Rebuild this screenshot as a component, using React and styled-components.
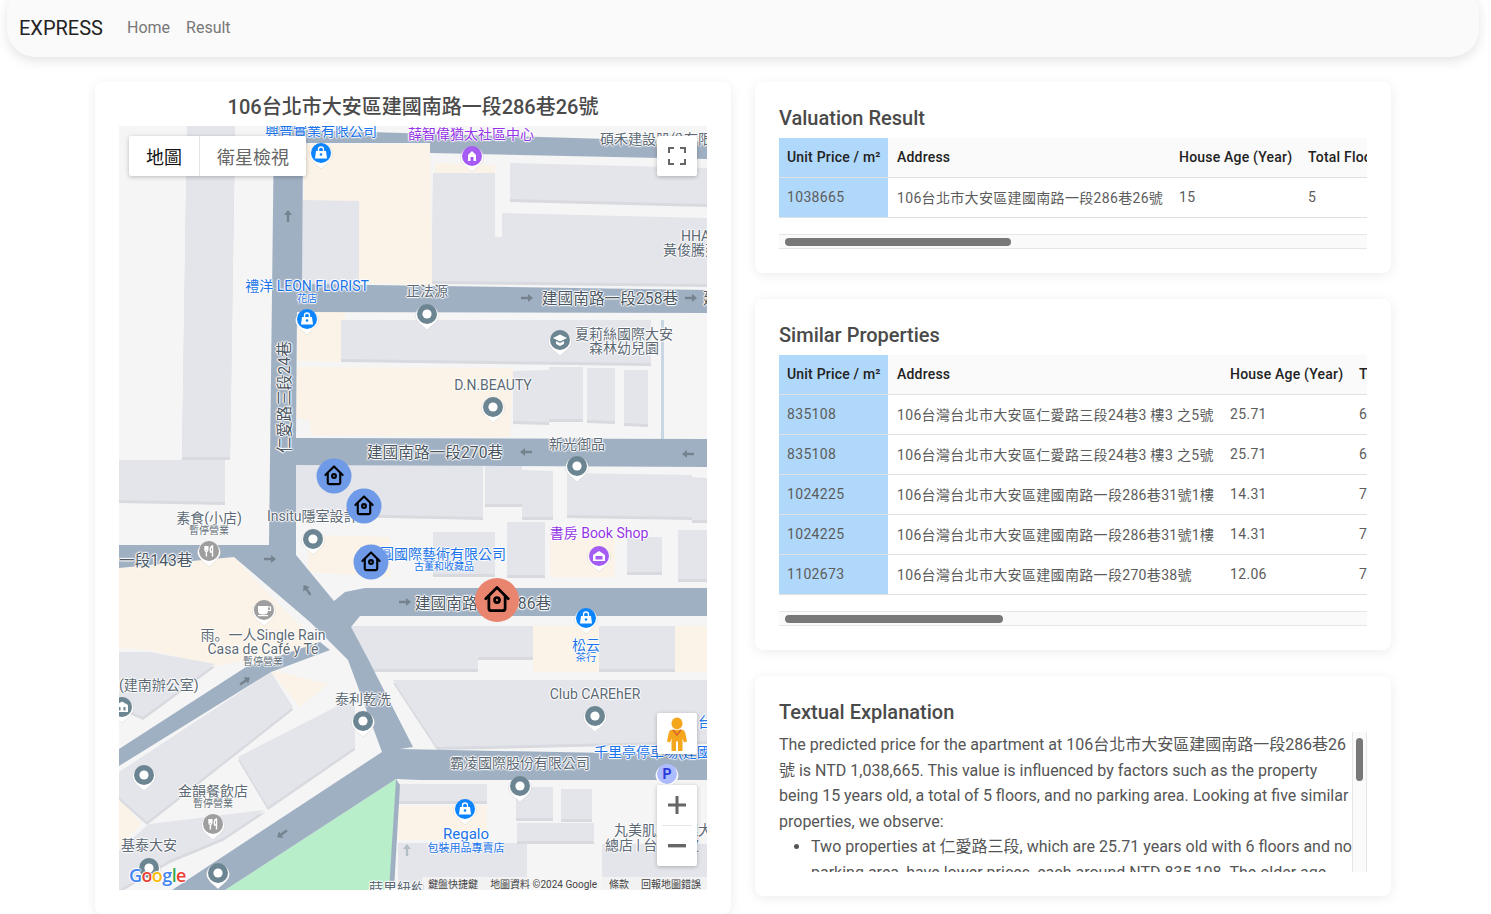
import React from "react";
import styled, { createGlobalStyle } from "styled-components";

const FONT = `Roboto, "Noto Sans CJK TC", "Noto Sans", sans-serif`;

const Global = createGlobalStyle`
  html, body { margin: 0; padding: 0; background: #fff; height: 914px; overflow: hidden; }
  body { font-family: ${FONT}; }
  * { box-sizing: border-box; }
`;

const Page = styled.div`
  width: 1487px;
  height: 914px;
  overflow: hidden;
`;

const NavBar = styled.nav`
  height: 72px;
  margin: -15px 8px 25px 7px;
  padding: 14px 12px 0;
  display: flex;
  align-items: center;
  background: #fafafa;
  border-radius: 28px;
  box-shadow: 0 4px 12px rgba(0, 0, 0, 0.11);
`;
const Brand = styled.a`
  font-size: 20px;
  line-height: 28px;
  color: #222;
  margin-right: 16px;
`;
const NavLink = styled.a`
  font-size: 16px;
  color: #777;
  padding: 0 8px;
  margin-bottom: 2px;
`;

const Columns = styled.main`
  width: 1296px;
  margin: 0 0 0 95px;
  display: grid;
  grid-template-columns: 636px 636px;
  column-gap: 24px;
  align-items: start;
`;
const Stack = styled.div`
  display: flex;
  flex-direction: column;
  gap: 26px;
`;
const Card = styled.section`
  background: #fff;
  border-radius: 8px;
  padding: 24px;
  box-shadow: 0 2px 12px rgba(0, 0, 0, 0.08);
`;
const MapCard = styled(Card)`
  padding: 13px 24px 24px;
`;
const MapTitle = styled.h2`
  margin: 0 0 7px;
  font-size: 20px;
  line-height: 24px;
  font-weight: 500;
  color: #4a4a4a;
  text-align: center;
`;
const CardTitle = styled.h3`
  margin: 0 0 8px;
  font-size: 20px;
  line-height: 24px;
  font-weight: 500;
  color: #4a4a4a;
`;

/* ---------- tables ---------- */
const TableClip = styled.div`
  overflow: hidden;
`;
const Table = styled.table`
  border-collapse: separate;
  border-spacing: 0;
  table-layout: fixed;
  margin-bottom: 16px;
  font-size: 14px;
`;
const Head = styled.th`
  height: 40px;
  padding: 0 8px 2px ${(p) => (p.$wide ? 9 : 8)}px;
  text-align: left;
  font-weight: 500;
  letter-spacing: 0.2px;
  color: #222;
  white-space: nowrap;
  overflow: hidden;
  background: ${(p) => (p.$accent ? "#b0d8fa" : "#fafafa")};
  border-bottom: 1px solid #e0e0e0;
`;
const Cell = styled.td`
  height: 40px;
  padding: 0 8px 2px ${(p) => (p.$wide ? 9 : 8)}px;
  color: #5c5c5c;
  letter-spacing: 0.33px;
  white-space: nowrap;
  overflow: hidden;
  background: ${(p) => (p.$accent ? "#b0d8fa" : "#fff")};
  border-bottom: 1px solid #e0e0e0;
`;
const HTrack = styled.div`
  height: 15px;
  padding: 3px 0 2px 6px;
  background: #fafafa;
  border-top: 1px solid #e6e6e6;
  border-bottom: 1px solid #e6e6e6;
`;
const HThumb = styled.div`
  width: ${(p) => p.$w}px;
  height: 8px;
  border-radius: 4px;
  background: #787878;
`;

const HEADS = ["Unit Price / m²", "Address", "House Age (Year)", "Total Floor"];

function DataTable({ widths, rows, thumb }) {
  return (
    <div>
      <TableClip>
        <Table style={{ width: widths.reduce((a, b) => a + b, 0) }}>
          <colgroup>
            {widths.map((w, i) => (
              <col key={i} style={{ width: w }} />
            ))}
          </colgroup>
          <thead>
            <tr>
              {HEADS.map((h, i) => (
                <Head key={h} $accent={i === 0} $wide={i === 1}>
                  {h}
                </Head>
              ))}
            </tr>
          </thead>
          <tbody>
            {rows.map((r, ri) => (
              <tr key={ri}>
                {r.map((c, i) => (
                  <Cell key={i} $accent={i === 0} $wide={i === 1}>
                    {c}
                  </Cell>
                ))}
              </tr>
            ))}
          </tbody>
        </Table>
      </TableClip>
      <HTrack>
        <HThumb $w={thumb} />
      </HTrack>
    </div>
  );
}

const Explain = styled.div`
  height: 140px;
  display: flex;
`;
const ExplainBody = styled.div`
  flex: 1;
  min-width: 0;
  overflow: hidden;
  font-size: 16px;
  line-height: 25.6px;
  color: #555;
`;
const ExplainText = styled.p`
  margin: 0;
`;
const ExplainList = styled.ul`
  margin: 0;
  padding-left: 32px;
`;
const VTrack = styled.div`
  flex: none;
  width: 15px;
  padding: 6px 3px 0 3px;
  background: #fafafa;
  border-left: 1px solid #e6e6e6;
  border-right: 1px solid #e6e6e6;
`;
const VThumb = styled.div`
  width: 7px;
  height: 43px;
  border-radius: 4px;
  background: #787878;
`;

/* ---------- map ---------- */
const MapBox = styled.div`
  position: relative;
  width: 588px;
  height: 764px;
  overflow: hidden;
  background: #f5f5f5;
`;
const MapSvg = styled.svg`
  position: absolute;
  inset: 0;
  width: 588px;
  height: 764px;
  pointer-events: none;
`;
const toneColor = { gray: "#5d6a75", blue: "#1a73e8", purple: "#9334e6", road: "#4b5762" };
const Label = styled.span`
  position: absolute;
  white-space: nowrap;
  line-height: 1;
  font-size: ${(p) => p.$size || 14}px;
  color: ${(p) => toneColor[p.$tone || "gray"]};
  font-weight: 400;
  font-family: ${(p) => (p.$sc ? `Roboto, "Noto Sans CJK SC", sans-serif` : "inherit")};
  text-shadow: -1px 0 1px #fff, 1px 0 1px #fff, 0 -1px 1px #fff, 0 1px 1px #fff, 0 0 2px #fff;
  transform: ${(p) => (p.$left ? "translate(0,-50%)" : "translate(-50%,-50%)")}
    ${(p) => (p.$rotate ? `rotate(${p.$rotate}deg)` : "")};
`;
const MapControl = styled.div`
  position: absolute;
  background: #fff;
  box-shadow: 0 1px 4px rgba(0, 0, 0, 0.25);
  display: flex;
`;
const TypeControl = styled(MapControl)`
  left: 10px;
  top: 10px;
  height: 40px;
  border-radius: 2px;
`;
const TypeButton = styled.div`
  display: flex;
  align-items: center;
  justify-content: center;
  padding: 0 17px;
  font-size: 18px;
  color: ${(p) => (p.$active ? "#111" : "#666")};
  border-left: ${(p) => (p.$divider ? "1px solid #e6e6e6" : "none")};
`;
const IconControl = styled(MapControl)`
  right: 10px;
  width: 40px;
  align-items: center;
  justify-content: center;
  border-radius: 2px;
`;
const FullscreenControl = styled(IconControl)`
  top: 10px;
  height: 40px;
`;
const PegmanControl = styled(IconControl)`
  top: 587px;
  height: 41px;
`;
const ZoomControl = styled(IconControl)`
  top: 659px;
  height: 81px;
  flex-direction: column;
`;
const ZoomButton = styled.div`
  height: 40px;
  width: 40px;
  display: flex;
  align-items: center;
  justify-content: center;
`;
const ZoomDivider = styled.div`
  width: 30px;
  height: 1px;
  background: #e6e6e6;
`;
const GoogleLogo = styled.div`
  position: absolute;
  left: 10px;
  bottom: 4px;
  font-family: "Open Sans", sans-serif;
  font-weight: 600;
  font-size: 18px;
  line-height: 22px;
  letter-spacing: -0.6px;
  text-shadow: -1px 0 1px #fff, 1px 0 1px #fff, 0 -1px 1px #fff, 0 1px 1px #fff;
`;
const Letter = styled.span`
  color: ${(p) => p.$c};
`;
const Attribution = styled.div`
  position: absolute;
  right: 0;
  bottom: 0;
  height: 13px;
  display: flex;
  align-items: center;
  background: rgba(245, 245, 245, 0.8);
  padding: 0 6px;
  gap: 12px;
  font-size: 10px;
  color: #444;
  white-space: nowrap;
`;

const BEIGE = [
  "304,144 430,144 432,285 304,282",
  "435,163 495,165 495,173 435,173",
  "298,312 345,312 343,362 297,361",
  "296,367 513,368 510,437 311,435 310,420 296,418",
  "308,535 390,537 390,577 308,572",
  "550,537 615,537 615,577 550,577",
  "119,568 234,557 290,616 322,645 215,666 150,650 119,648",
  "270,670 328,684 300,707",
  "119,797 141,824 119,847",
  "533,626 599,626 599,672 533,672",
  "675,626 707,626 707,672 675,672",
  "398,806 487,806 487,840 398,840",
];
const BUILDINGS = [
  "187,126 235,126 230,457 182,457",
  "119,460 225,460 225,502 119,500",
  "299,200 359,201 359,284 299,282",
  "510,163 588,165 588,201 510,199",
  "588,165 707,168 707,204 588,201",
  "433,173 495,173 495,237 502,237 502,213 707,218 707,284 432,281",
  "341,320 651,320 651,363 341,359",
  "513,371 549,370 549,422 513,421",
  "549,367 583,367 583,419 549,419",
  "587,368 615,368 615,421 587,420",
  "624,370 648,370 648,424 624,423",
  "293,464 483,466 483,517 293,513",
  "485,463 522,464 522,504 485,504",
  "522,470 553,471 553,517 522,517",
  "567,473 692,475 692,517 567,515",
  "692,477 707,478 707,520 692,520",
  "433,532 495,532 495,574 433,574",
  "507,522 545,522 545,575 507,575",
  "627,537 662,537 662,572 627,572",
  "678,530 707,530 707,579 678,579",
  "119,652 150,652 215,664 143,717 119,706",
  "271,672 293,707 147,822 119,797 119,772",
  "238,757 355,697 355,747 268,807",
  "149,824 265,810 223,838 170,860 119,890 119,850",
  "349,626 533,626 533,657 478,657 478,669 367,669 359,640 349,640",
  "599,626 675,626 675,669 599,669",
  "393,680 707,680 707,741 437,747",
  "398,784 487,784 487,801 398,801",
  "398,843 527,843 527,890 398,890",
  "516,787 553,787 553,818 516,818",
  "561,789 592,789 592,819 561,819",
  "517,823 594,823 594,841 517,841",
  "602,844 707,844 707,890 602,890",
];
const ROADS = [
  "303,126 274,126 269,545 119,545 119,568 234,557 310,622 348,660 382,752 172,890 225,890 396,779 420,780 707,780 707,755 400,749 413,747 367,657 351,627 360,616 707,616 707,588 365,588 345,592 334,601 296,555 296,465 707,467 707,439 296,438 297,312 707,313 707,290 302,284 303,143 430,143 430,153 707,159 707,142 303,130",
  "119,749 246,667 320,642 330,650 271,672 119,766",
  "396,779 400,785 394,890 389,890",
];
const STREAM = "661,320 664,320 664,440 661,440";

const R = 15.7;
const LABELS = [
  { t: "興普實業有限公司", x: 321, y: 131, s: 14, k: "blue" },
  { t: "薛智偉猶太社區中心", x: 471, y: 134, s: 14, k: "purple" },
  { t: "碩禾建設股份有限公司", x: 600, y: 139, s: 14, left: 1 },
  { t: "HHA", x: 681, y: 236, s: 14, left: 1 },
  { t: "黃俊騰建築師事務所", x: 663, y: 250, s: 14, left: 1 },
  { t: "禮洋 LEON FLORIST", x: 307, y: 286, s: 14, k: "blue" },
  { t: "花店", x: 307, y: 299, s: 10, k: "blue" },
  { t: "正法源", x: 427, y: 291, s: 14 },
  { t: "建國南路一段258巷", x: 610, y: 299, s: R, k: "road" },
  { t: "建國", x: 703, y: 299, s: R, k: "road", left: 1 },
  { t: "夏莉絲國際大安", x: 624, y: 334, s: 14 },
  { t: "森林幼兒園", x: 624, y: 348, s: 14 },
  { t: "D.N.BEAUTY", x: 493, y: 385, s: 14 },
  { t: "仁愛路三段24巷", x: 285, y: 397, s: R, k: "road", r: -90 },
  { t: "建國南路一段270巷", x: 435, y: 453, s: R, k: "road" },
  { t: "新光御品", x: 577, y: 444, s: 14 },
  { t: "素食(小店)", x: 209, y: 518, s: 14 },
  { t: "暫停營業", x: 209, y: 531, s: 10 },
  { t: "Insitu隱室設計", x: 267, y: 516, s: 14, left: 1 },
  { t: "一段143巷", x: 119, y: 561, s: R, k: "road", left: 1 },
  { t: "書房 Book Shop", x: 599, y: 533, s: 14, k: "purple" },
  { t: "圓國際藝術有限公司", x: 380, y: 554, s: 14, k: "blue", left: 1 },
  { t: "古董和收藏品", x: 444, y: 567, s: 10, k: "blue" },
  { t: "建國南路一段286巷", x: 483, y: 604, s: R, k: "road" },
  { t: "雨。一人Single Rain", x: 263, y: 635, s: 14, sc: 1 },
  { t: "Casa de Café y Té", x: 263, y: 649, s: 14 },
  { t: "暫停營業", x: 263, y: 662, s: 10 },
  { t: "松云", x: 586, y: 645, s: 14, k: "blue" },
  { t: "茶行", x: 586, y: 658, s: 10.5, k: "blue" },
  { t: "(建南辦公室)", x: 119, y: 685, s: 14, left: 1 },
  { t: "泰利乾洗", x: 363, y: 699, s: 14 },
  { t: "Club CAREhER", x: 595, y: 694, s: 14 },
  { t: "台", x: 698, y: 722, s: 14, k: "blue", left: 1 },
  { t: "千里亭停車場(建國", x: 594, y: 752, s: 14, k: "blue", left: 1 },
  { t: "霸凌國際股份有限公司", x: 520, y: 763, s: 14 },
  { t: "金韻餐飲店", x: 213, y: 791, s: 14 },
  { t: "暫停營業", x: 213, y: 804, s: 10 },
  { t: "Regalo", x: 466, y: 834, s: 15, k: "blue" },
  { t: "包裝用品專賣店", x: 466, y: 848, s: 11, k: "blue" },
  { t: "丸美肌膚管理大", x: 614, y: 830, s: 14, left: 1 },
  { t: "總店 | 台大安皮", x: 605, y: 845, s: 14, left: 1 },
  { t: "基泰大安", x: 149, y: 845, s: 14 },
  { t: "蒔里紐約", x: 369, y: 888, s: 14, left: 1 },
];

const ARROWS = [
  { x: 288, y: 216, a: -90 },
  { x: 527, y: 298, a: 0 },
  { x: 691, y: 298, a: 0 },
  { x: 526, y: 452, a: 180 },
  { x: 688, y: 454, a: 180 },
  { x: 270, y: 559, a: 0 },
  { x: 307, y: 590, a: -125 },
  { x: 405, y: 602, a: 0 },
  { x: 245, y: 681, a: -35 },
  { x: 282, y: 834, a: 145 },
  { x: 407, y: 850, a: -90, light: 1 },
];

function Arrow({ x, y, a, light }) {
  return (
    <g transform={`translate(${x} ${y}) rotate(${a})`} fill={light ? "#b4bec6" : "#75838f"}>
      <path d="M-6 -1.2H1V-4L6 0L1 4V1.2H-6Z" />
    </g>
  );
}

function Pin({ x, y, color, children }) {
  return (
    <g transform={`translate(${x} ${y})`}>
      <path
        d="M-11.5 2A11.5 11.5 0 1 1 11.5 2C11.5 7 4 12 0 16C-4 12 -11.5 7 -11.5 2Z"
        fill="#fff"
        stroke="#000"
        strokeOpacity="0.08"
        strokeWidth="1"
      />
      <circle r="10" fill={color} />
      {children}
    </g>
  );
}
const Bag = () => (
  <g>
    <path d="M-5 -2H5L6 5.5H-6Z" fill="#fff" />
    <path d="M-2.5 -2V-3.5A2.5 2.5 0 0 1 2.5 -3.5V-2" fill="none" stroke="#fff" strokeWidth="1.3" />
    <circle cy="1.5" r="1.3" fill={"#0a84ff"} />
  </g>
);
const Dot = () => <circle r="4.6" fill="#fff" />;

const DOTS = [
  [427, 314], [493, 407], [577, 466], [313, 539], [363, 721],
  [595, 716], [144, 775], [520, 786], [218, 873], [149, 868],
];
const BAGS = [[321, 153], [307, 319], [586, 618], [465, 809]];

function House({ x, y, r, color, size }) {
  const s = size / 24;
  return (
    <g transform={`translate(${x} ${y})`}>
      <circle r={r} fill={color} />
      <g
        transform={`scale(${s}) translate(-12 -13)`}
        fill="none"
        stroke="#000"
        strokeWidth="2.2"
        strokeLinecap="round"
        strokeLinejoin="round"
      >
        <path d="M3 12L12 3L21 12" />
        <path d="M5.5 10V19.5A2 2 0 0 0 7.5 21.5H16.5A2 2 0 0 0 18.5 19.5V10" />
        <circle cx="12" cy="13" r="2" />
      </g>
    </g>
  );
}

function MapView() {
  return (
    <MapBox>
      <MapSvg viewBox="119 126 588 764">
        {BEIGE.map((p) => (
          <polygon key={p} points={p} fill="#fbf3e7" />
        ))}
        {BUILDINGS.map((p) => (
          <g key={p}>
            <polygon points={p} fill="#d8dae0" transform="translate(0 3)" />
            <polygon points={p} fill="#e3e5ea" />
          </g>
        ))}
        <polygon points={STREAM} fill="#c9d7e5" />
        <polygon points="396,779 225,890 390,890 396,800" fill="#b9eecb" />
        {ROADS.map((p) => (
          <polygon key={p} points={p} fill="#a0b0c3" />
        ))}
        {ARROWS.map((a, i) => (
          <Arrow key={i} {...a} />
        ))}
      </MapSvg>
      {LABELS.map((l, i) => (
        <Label
          key={i}
          $size={l.s}
          $tone={l.k}
          $left={l.left}
          $rotate={l.r}
          $sc={l.sc}
          style={{ left: l.x - 119, top: l.y - 126 }}
        >
          {l.t}
        </Label>
      ))}
      <MapSvg viewBox="119 126 588 764">
        {DOTS.map(([x, y]) => (
          <Pin key={`${x}${y}`} x={x} y={y} color="#6b8592">
            <Dot />
          </Pin>
        ))}
        {BAGS.map(([x, y]) => (
          <Pin key={`${x}${y}`} x={x} y={y} color="#0a84ff">
            <Bag />
          </Pin>
        ))}
        <Pin x={472} y={156} color="#a45cf2">
          <path d="M-4 5V-1L0 -5L4 -1V5Z" fill="#fff" />
          <rect x="-1.5" y="1" width="3" height="4" fill="#a45cf2" />
        </Pin>
        <Pin x={599} y={556} color="#a45cf2">
          <path d="M-6 -1L0 -5L6 -1V5H-6Z" fill="#fff" />
          <rect x="-3.5" y="0" width="7" height="3.5" fill="#a45cf2" />
        </Pin>
        <Pin x={560} y={340} color="#6b8592">
          <path d="M-7 -2L0 -5.5L7 -2L0 1.5Z" fill="#fff" />
          <path d="M-4 1V4L0 6L4 4V1L0 3Z" fill="#fff" />
        </Pin>
        <Pin x={122} y={707} color="#6b8592">
          <path d="M-6 -2L0 -5.5L6 -2V5H-6Z" fill="#fff" />
          <rect x="-3.5" y="0" width="2" height="3.5" fill="#6b8592" />
          <rect x="1.5" y="0" width="2" height="3.5" fill="#6b8592" />
        </Pin>
        {[[209, 551], [213, 824]].map(([x, y]) => (
          <Pin key={x} x={x} y={y} color="#9e9e9e">
            <path
              d="M-4 -5V-1A1.5 1.5 0 0 0 -2.6 0.5V5.5M-2.6 -5V-1M-1.2 -5V-1A1.5 1.5 0 0 1 -2.6 0.5M3.5 5.5V-5C1.5 -4.5 1 -1.5 1.5 1H3.5"
              fill="none"
              stroke="#fff"
              strokeWidth="1.4"
            />
          </Pin>
        ))}
        <Pin x={264} y={610} color="#9e9e9e">
          <path d="M-6 -4H4V1A4 4 0 0 1 0 4.5H-2A4 4 0 0 1 -6 1Z" fill="#fff" />
          <path d="M4 -3H6.5V0.5H4" fill="none" stroke="#fff" strokeWidth="1.2" />
          <rect x="-6" y="5" width="10" height="1.2" fill="#fff" />
        </Pin>
        <Pin x={667} y={774} color="#adbcff">
          <text x="0" y="5" textAnchor="middle" fontSize="14" fontWeight="700" fill="#2b3bd6" fontFamily="Roboto">
            P
          </text>
        </Pin>
        <House x={334} y={476} r={17.5} color="#6f9ae8" size={23} />
        <House x={364} y={506} r={17.5} color="#6f9ae8" size={23} />
        <House x={371} y={562} r={17.5} color="#6f9ae8" size={23} />
        <House x={497} y={600} r={22} color="#e9846f" size={30} />
      </MapSvg>

      <TypeControl>
        <TypeButton $active>地圖</TypeButton>
        <TypeButton $divider>衛星檢視</TypeButton>
      </TypeControl>
      <FullscreenControl>
        <svg width="18" height="18" viewBox="0 0 18 18" fill="none" stroke="#666" strokeWidth="2">
          <path d="M1 6V1H6M12 1H17V6M17 12V17H12M6 17H1V12" />
        </svg>
      </FullscreenControl>
      <PegmanControl>
        <svg width="20" height="34" viewBox="0 0 20 32" preserveAspectRatio="none">
          <circle cx="10" cy="6" r="5.5" fill="#f4a61c" />
          <path
            d="M5 12H15C17 12 18 14 18.5 16L20 23L17 24L15.5 20V32H11V23H9V32H4.5V20L3 24L0 23L1.5 16C2 14 3 12 5 12Z"
            fill="#f4a61c"
          />
          <path d="M6 12L10 17L14 12" fill="none" stroke="#d9622b" strokeWidth="1.4" />
        </svg>
      </PegmanControl>
      <ZoomControl>
        <ZoomButton>
          <svg width="18" height="18" viewBox="0 0 18 18" fill="#666">
            <path d="M7.5 0H10.5V7.5H18V10.5H10.5V18H7.5V10.5H0V7.5H7.5Z" />
          </svg>
        </ZoomButton>
        <ZoomDivider />
        <ZoomButton>
          <svg width="18" height="4" viewBox="0 0 18 4" fill="#666">
            <rect width="18" height="3.4" />
          </svg>
        </ZoomButton>
      </ZoomControl>
      <GoogleLogo>
        <Letter $c="#4285f4">G</Letter>
        <Letter $c="#ea4335">o</Letter>
        <Letter $c="#fbbc05">o</Letter>
        <Letter $c="#4285f4">g</Letter>
        <Letter $c="#34a853">l</Letter>
        <Letter $c="#ea4335">e</Letter>
      </GoogleLogo>
      <Attribution>
        <span>鍵盤快捷鍵</span>
        <span>地圖資料 ©2024 Google</span>
        <span>條款</span>
        <span>回報地圖錯誤</span>
      </Attribution>
    </MapBox>
  );
}

const A1 = "106台北市大安區建國南路一段286巷26號";
const RESULT = [["1038665", A1, "15", "5"]];
const SIMILAR = [
  ["835108", "106台灣台北市大安區仁愛路三段24巷3 樓3 之5號", "25.71", "6"],
  ["835108", "106台灣台北市大安區仁愛路三段24巷3 樓3 之5號", "25.71", "6"],
  ["1024225", "106台灣台北市大安區建國南路一段286巷31號1樓", "14.31", "7"],
  ["1024225", "106台灣台北市大安區建國南路一段286巷31號1樓", "14.31", "7"],
  ["1102673", "106台灣台北市大安區建國南路一段270巷38號", "12.06", "7"],
];

export default function App() {
  return (
    <Page>
      <Global />
      <NavBar>
        <Brand>EXPRESS</Brand>
        <NavLink>Home</NavLink>
        <NavLink>Result</NavLink>
      </NavBar>
      <Columns>
        <MapCard>
          <MapTitle>106台北市大安區建國南路一段286巷26號</MapTitle>
          <MapView />
        </MapCard>
        <Stack>
          <Card>
            <CardTitle>Valuation Result</CardTitle>
            <DataTable widths={[109, 283, 129, 130]} rows={RESULT} thumb={226} />
          </Card>
          <Card>
            <CardTitle>Similar Properties</CardTitle>
            <DataTable widths={[109, 334, 129, 130]} rows={SIMILAR} thumb={218} />
          </Card>
          <Card>
            <CardTitle>Textual Explanation</CardTitle>
            <Explain>
              <ExplainBody>
                <ExplainText>
                  The predicted price for the apartment at 106台北市大安區建國南路一段286巷26號 is NTD
                  1,038,665. This value is influenced by factors such as the property being 15 years old,
                  a total of 5 floors, and no parking area. Looking at five similar properties, we observe:
                </ExplainText>
                <ExplainList>
                  <li>
                    Two properties at 仁愛路三段, which are 25.71 years old with 6 floors and no parking
                    area, have lower prices, each around NTD 835,108. The older age suggests a lower value.
                  </li>
                </ExplainList>
              </ExplainBody>
              <VTrack>
                <VThumb />
              </VTrack>
            </Explain>
          </Card>
        </Stack>
      </Columns>
    </Page>
  );
}
